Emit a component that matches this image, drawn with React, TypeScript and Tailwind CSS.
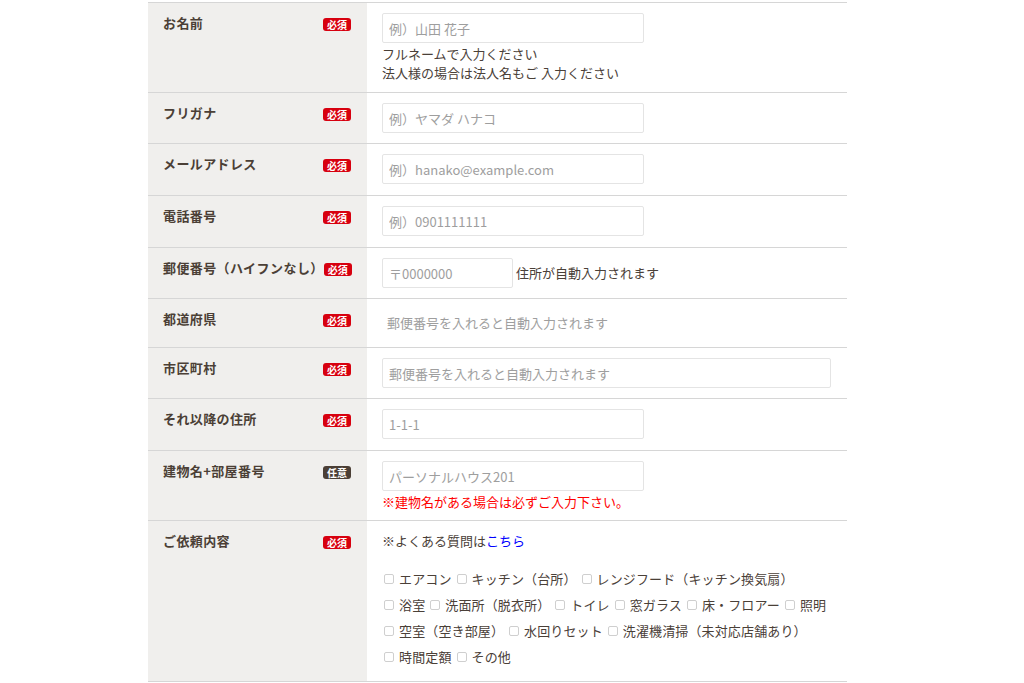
import type { ReactNode } from "react";

type Badge = "required" | "optional";

const font = { fontFamily: '"Noto Sans CJK JP", "Noto Sans", sans-serif' };

function Tag({ kind }: { kind: Badge }) {
	return (
		<span
			className={`flex h-[13px] w-[28px] shrink-0 items-center justify-center rounded-[3px] font-bold text-[10px] text-white leading-none ${
				kind === "required" ? "bg-[#d7000f]" : "bg-[#4b3f36]"
			}`}
		>
			{kind === "required" ? "必須" : "任意"}
		</span>
	);
}

function Row({
	label,
	badge = "required",
	children,
	className = "",
}: {
	label: string;
	badge?: Badge;
	children: ReactNode;
	className?: string;
}) {
	return (
		<div className="flex border-[#d6d6d6] border-b">
			<div className="flex w-[219px] shrink-0 items-start justify-between bg-[#f0efed] pt-[10px] pr-[16px] pl-[15px]">
				<span className="whitespace-nowrap font-bold text-[#4b3f36] text-[13px] leading-[20px] tracking-[0.03em]">
					{label}
				</span>
				<span className="mt-[5px]">
					<Tag kind={badge} />
				</span>
			</div>
			<div className={`flex-1 px-[15px] pt-[10px] ${className}`}>{children}</div>
		</div>
	);
}

function Field({ placeholder, width = "w-[262px]" }: { placeholder: string; width?: string }) {
	return (
		<input
			className={`h-[30px] ${width} rounded-[2px] border border-[#e4e4e4] bg-white px-[6px] text-[13px] text-[#4a4038] outline-none placeholder:text-[#9e9e9e]`}
			placeholder={placeholder}
			readOnly
			style={font}
			type="text"
		/>
	);
}

const serviceLines = [
	["エアコン", "キッチン（台所）", "レンジフード（キッチン換気扇）"],
	["浴室", "洗面所（脱衣所）", "トイレ", "窓ガラス", "床・フロアー", "照明"],
	["空室（空き部屋）", "水回りセット", "洗濯機清掃（未対応店舗あり）"],
	["時間定額", "その他"],
];

export default function App() {
	return (
		<main className="min-h-screen bg-white pt-[2px]" style={font}>
			<div className="ml-[148px] w-[699px] border-[#d6d6d6] border-t text-[#4a4038] text-[13px]">
				<Row label="お名前" className="pb-[10px]">
					<Field placeholder="例）山田 花子" />
					<p className="mt-[1px] leading-[19px]">フルネームで入力ください</p>
					<p className="leading-[19px]">法人様の場合は法人名もご 入力ください</p>
				</Row>

				<Row label="フリガナ" className="pb-[10px]">
					<Field placeholder="例）ヤマダ ハナコ" />
				</Row>

				<Row label="メールアドレス" className="pb-[11px]">
					<Field placeholder="例）hanako@example.com" />
				</Row>

				<Row label="電話番号" className="pb-[11px]">
					<Field placeholder="例）0901111111" />
				</Row>

				<Row label="郵便番号（ハイフンなし）" className="pb-[10px]">
					<div className="flex items-center gap-[3px]">
						<Field placeholder="〒0000000" width="w-[131px]" />
						<span>住所が自動入力されます</span>
					</div>
				</Row>

				<Row label="都道府県" className="pb-[10px]">
					<div className="flex h-[28px] items-center pl-[5px] text-[#9e9e9e]">
						郵便番号を入れると自動入力されます
					</div>
				</Row>

				<Row label="市区町村" className="pb-[10px]">
					<Field placeholder="郵便番号を入れると自動入力されます" width="w-[449px]" />
				</Row>

				<Row label="それ以降の住所" className="pb-[11px]">
					<Field placeholder="1-1-1" />
				</Row>

				<Row label="建物名+部屋番号" badge="optional" className="pb-[8px]">
					<Field placeholder="パーソナルハウス201" />
					<p className="mt-[1px] text-[#ff0000] leading-[20px]">
						※建物名がある場合は必ずご入力下さい。
					</p>
				</Row>

				<Row label="ご依頼内容" className="pb-[11px]">
					<p className="leading-[20px]">
						※よくある質問は
						<a className="text-[#0000ff]" href="#faq">
							こちら
						</a>
					</p>
					<div className="mt-[15px]">
						{serviceLines.map((line) => (
							<div className="flex h-[26px] items-center" key={line[0]}>
								{line.map((name) => (
									<label className="flex items-center" key={name}>
										<span className="mr-[5px] ml-[2px] h-[10px] w-[10px] rounded-[2px] border border-[#cfcfcf] bg-white" />
										<span className="mr-[3px] whitespace-nowrap tracking-[0.01em]">{name}</span>
									</label>
								))}
							</div>
						))}
					</div>
				</Row>
			</div>
		</main>
	);
}
